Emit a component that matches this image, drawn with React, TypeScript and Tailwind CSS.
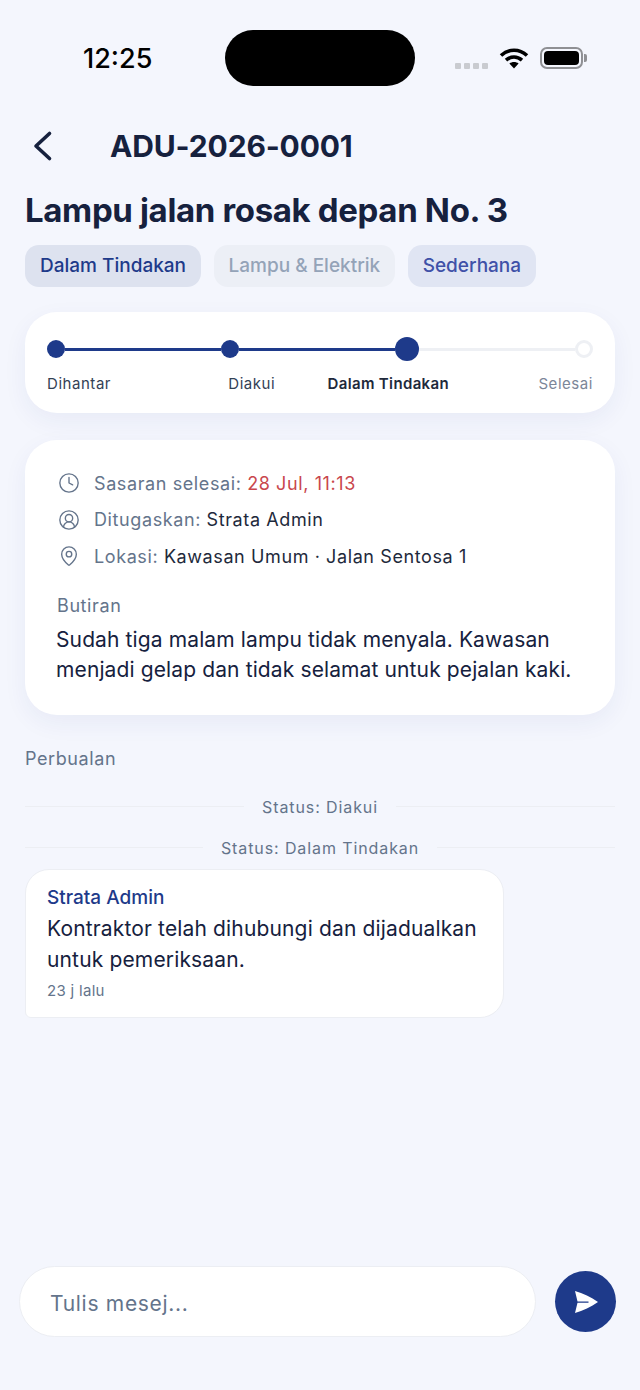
import React from "react";
import { Clock, CircleUserRound, MapPin } from "lucide-react";

const font = { fontFamily: "Inter, 'Noto Sans', sans-serif" };

const StatusBar = () => (
  <div className="relative h-[116px] shrink-0">
    <span className="absolute left-[83px] top-[42px] text-[27px] leading-[34px] font-medium text-black">12:25</span>
    {/* dynamic island */}
    <div className="absolute left-[225px] top-[30px] w-[190px] h-[56px] rounded-full bg-black" />
    <div className="absolute left-[455px] top-[63px] flex gap-[3px]">
      <div className="w-[6px] h-[6px] rounded-[1px] bg-[#c9cbd0]" />
      <div className="w-[6px] h-[6px] rounded-[1px] bg-[#c9cbd0]" />
      <div className="w-[6px] h-[6px] rounded-[1px] bg-[#c9cbd0]" />
      <div className="w-[6px] h-[6px] rounded-[1px] bg-[#c9cbd0]" />
    </div>
    <svg className="absolute left-[499px] top-[47px]" width="30" height="22" viewBox="0 0 30 22" fill="none">
      <path d="M2 8.5C9.5 1.5 20.5 1.5 28 8.5" stroke="#000" strokeWidth="3.6" />
      <path d="M7 13.2C11.8 9 18.2 9 23 13.2" stroke="#000" strokeWidth="3.6" />
      <path d="M15 21.5L10.4 16.6C13 14.6 17 14.6 19.6 16.6Z" fill="#000" />
    </svg>
    <div className="absolute left-[540px] top-[47px] w-[43px] h-[22px] rounded-[7px] border-2 border-[#8f9094] p-[2px]">
      <div className="w-full h-full rounded-[4px] bg-black" />
    </div>
    <div className="absolute left-[584px] top-[54px] w-[3px] h-[8px] rounded-r-[2px] bg-[#8f9094]" />
  </div>
);

const Chip = ({ label, className }: { label: string; className: string }) => (
  <span className={`h-[42px] flex items-center px-[15px] rounded-[14px] text-[19px] font-medium ${className}`}>{label}</span>
);

const Dot = ({ big }: { big?: boolean }) => (
  <div className={big ? "w-[24px] h-[24px] rounded-full bg-[#1e3a8a] shrink-0" : "w-[18px] h-[18px] rounded-full bg-[#1e3a8a] shrink-0"} />
);

const InfoRow = ({ icon, label, value, valueClass }: { icon: React.ReactNode; label: string; value: string; valueClass: string }) => (
  <div className="flex items-center h-[36.5px]">
    <div className="w-[37px] flex justify-center pr-[13px] text-[#64748b]">{icon}</div>
    <span className="text-[18px] tracking-[0.6px] text-[#64748b]">{label}&nbsp;</span>
    <span className={`text-[18px] tracking-[0.6px] ${valueClass}`}>{value}</span>
  </div>
);

const StatusLine = ({ label }: { label: string }) => (
  <div className="flex items-center gap-[18px] h-[41px]">
    <div className="flex-1 h-px bg-[#eceef3]" />
    <span className="text-[16px] tracking-[0.9px] text-[#64748b]">{label}</span>
    <div className="flex-1 h-px bg-[#eceef3]" />
  </div>
);

export default function App() {
  return (
    <div className="min-h-[1390px] flex flex-col bg-[#f4f6fd]" style={font}>
      <StatusBar />

      {/* HEADER */}
      <div className="flex items-center h-[60px] pl-[25px]">
        <svg width="34" height="34" viewBox="0 0 34 34" fill="none" className="shrink-0">
          <path d="M24.5 4.5L11 17L24.5 29.5" stroke="#16213e" strokeWidth="3.6" strokeLinecap="round" strokeLinejoin="round" />
        </svg>
        <h1 className="ml-[51px] text-[30px] font-bold tracking-[-0.15px] text-[#16213e]">ADU-2026-0001</h1>
      </div>

      <div className="px-[25px]">
        <h2 className="mt-[12px] text-[33px] leading-[44px] font-bold tracking-[-0.35px] text-[#16213e]">Lampu jalan rosak depan No. 3</h2>

        {/* CHIPS */}
        <div className="flex gap-[12.5px] mt-[13px]">
          <Chip label="Dalam Tindakan" className="bg-[#dde2ef] text-[#1e3a8a]" />
          <Chip label="Lampu & Elektrik" className="bg-[#eceff6] text-[#94a3b8]" />
          <Chip label="Sederhana" className="bg-[#e0e5f3] text-[#3f51a8]" />
        </div>

        {/* STEPPER */}
        <div className="mt-[25px] h-[101px] rounded-[32px] bg-white px-[22px] pt-[25px] shadow-[0_8px_24px_rgba(30,58,138,0.06)]">
          <div className="flex items-center h-[24px]">
            <Dot />
            <div className="flex-1 h-[3px] bg-[#1e3a8a]" />
            <Dot />
            <div className="flex-1 h-[3px] bg-[#1e3a8a]" />
            <Dot big />
            <div className="flex-1 h-[3px] bg-[#eef0f4]" />
            <div className="w-[18px] h-[18px] rounded-full border-[3px] border-[#eef0f4] bg-white shrink-0" />
          </div>
          <div className="grid grid-cols-4 mt-[13px] text-[15px] leading-[20px] tracking-[0.55px]">
            <span className="text-left text-[#334155]">Dihantar</span>
            <span className="text-center text-[#334155]">Diakui</span>
            <span className="text-center font-semibold tracking-[0.35px] text-[#1e293b] whitespace-nowrap">Dalam Tindakan</span>
            <span className="text-right text-[#7c8698]">Selesai</span>
          </div>
        </div>

        {/* DETAILS */}
        <div className="mt-[27px] h-[275px] rounded-[32px] bg-white pl-[32px] pr-[30px] pt-[25px] shadow-[0_8px_24px_rgba(30,58,138,0.06)]">
          <InfoRow icon={<Clock size={22} strokeWidth={1.5} />} label="Sasaran selesai:" value="28 Jul, 11:13" valueClass="text-[#c9474d]" />
          <InfoRow icon={<CircleUserRound size={22} strokeWidth={1.5} />} label="Ditugaskan:" value="Strata Admin" valueClass="text-[#1e293b]" />
          <InfoRow icon={<MapPin size={22} strokeWidth={1.5} />} label="Lokasi:" value="Kawasan Umum · Jalan Sentosa 1" valueClass="text-[#1e293b]" />
          <p className="mt-[19px] text-[18px] leading-[24px] tracking-[0.6px] text-[#64748b]">Butiran</p>
          <p className="mt-[7px] -ml-px text-[21px] leading-[30px] tracking-[0.12px] text-[#16213e]">
            Sudah tiga malam lampu tidak menyala. Kawasan menjadi gelap dan tidak selamat untuk pejalan kaki.
          </p>
        </div>

        {/* CHAT */}
        <p className="mt-[32px] text-[18px] leading-[24px] tracking-[0.6px] text-[#64748b]">Perbualan</p>
        <div className="mt-[15px]">
          <StatusLine label="Status: Diakui" />
          <StatusLine label="Status: Dalam Tindakan" />
        </div>
        <div className="w-[479px] h-[149px] mt-[1px] rounded-[24px] rounded-bl-[6px] bg-white border border-[#eceef3] px-[21px] pt-[15px]">
          <p className="text-[19px] leading-[26px] font-medium text-[#1e3a8a]">Strata Admin</p>
          <p className="mt-[2px] text-[21px] leading-[31px] tracking-[0.15px] text-[#16213e]">Kontraktor telah dihubungi dan dijadualkan untuk pemeriksaan.</p>
          <p className="mt-[6px] text-[15px] leading-[20px] tracking-[0.3px] text-[#64748b]">23 j lalu</p>
        </div>
      </div>

      <div className="flex-1" />

      {/* COMPOSER */}
      <div className="flex items-center pl-[19px] pr-[24px] pb-[53px] gap-[19px]">
        <div className="flex-1 h-[71px] flex items-center pl-[30px] pt-[5px] rounded-full bg-white border border-[#eceef3] text-[21px] tracking-[0.7px] text-[#64748b]">
          Tulis mesej...
        </div>
        <button className="w-[61px] h-[61px] rounded-full bg-[#1e3a8a] flex items-center justify-center shrink-0">
          <svg width="24" height="22" viewBox="0 0 24 22" fill="#fff">
            <path d="M1 0C9 2.5 17 6 24 11C17 16 9 19.5 1 22L3.5 11.8H14.5V10.6H3.5Z" />
          </svg>
        </button>
      </div>
    </div>
  );
}
